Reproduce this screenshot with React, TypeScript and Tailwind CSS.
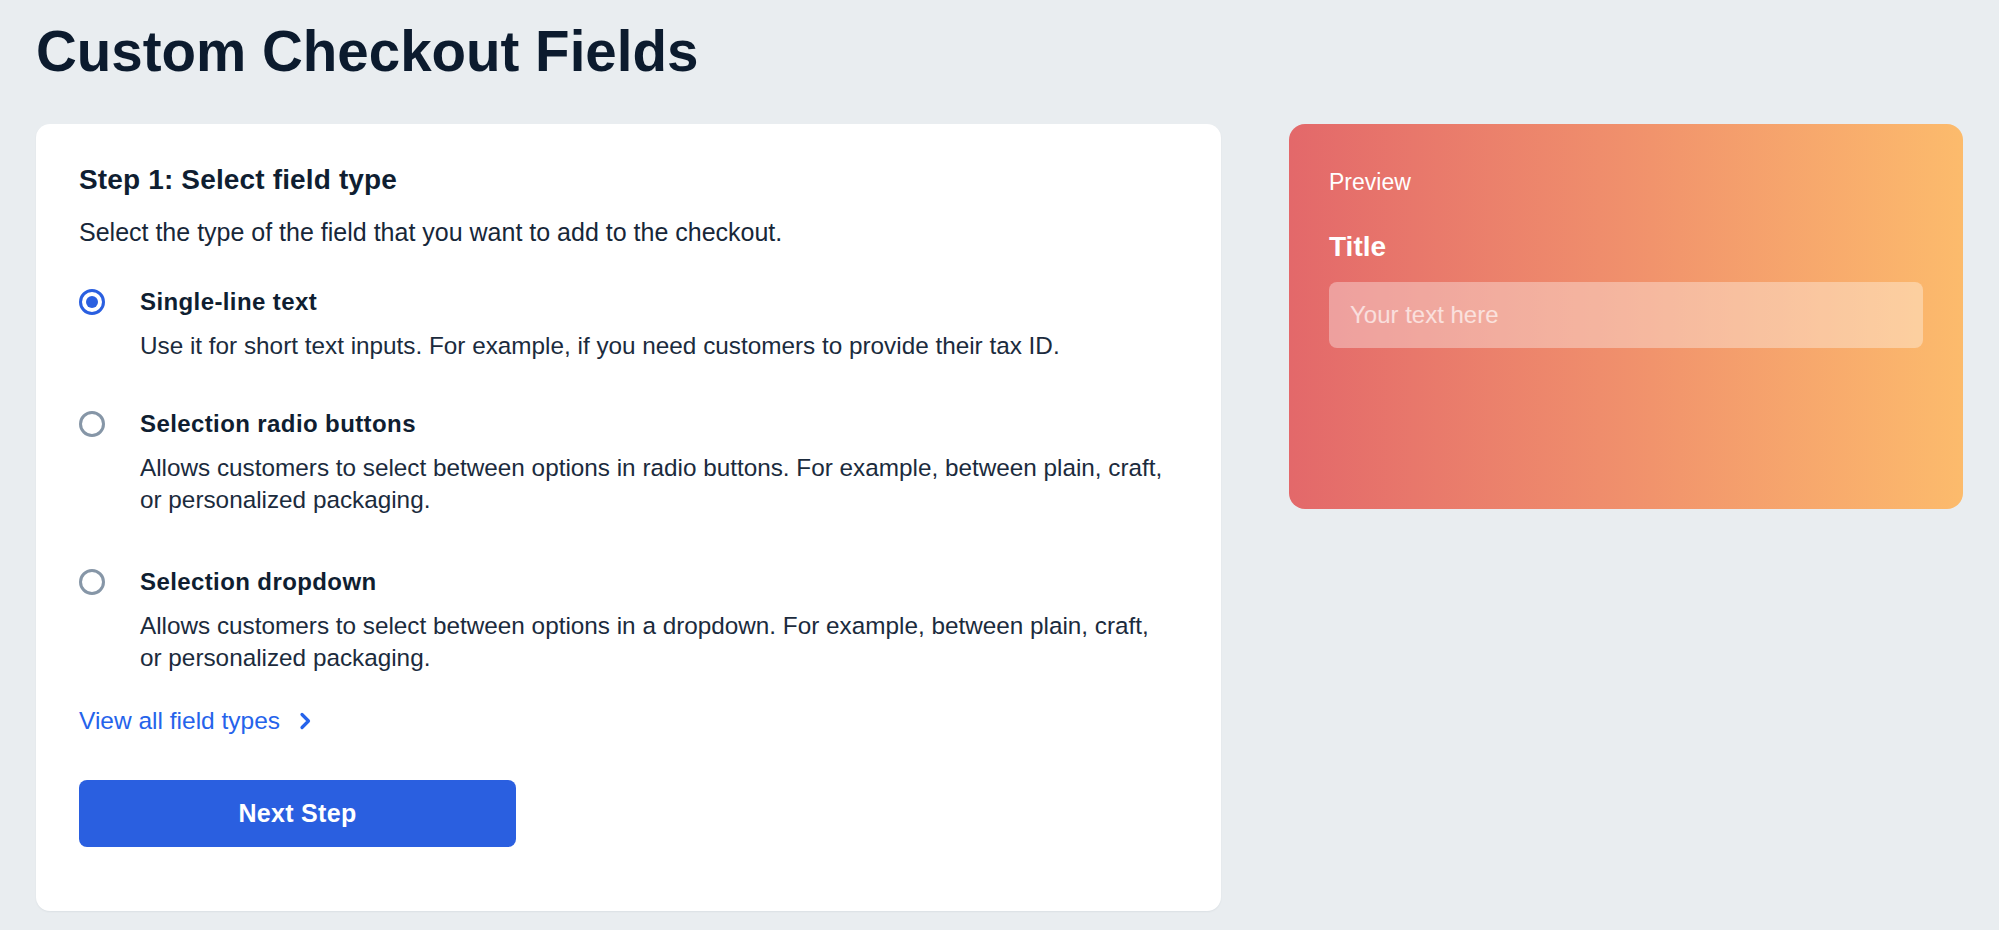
import React from "react";

type Item = { label: string; lines: string[]; selected?: boolean; gap: string };

const items: Item[] = [
  {
    label: "Single-line text",
    lines: ["Use it for short text inputs. For example, if you need customers to provide their tax ID."],
    selected: true,
    gap: "mt-0",
  },
  {
    label: "Selection radio buttons",
    lines: [
      "Allows customers to select between options in radio buttons. For example, between plain, craft,",
      "or personalized packaging.",
    ],
    gap: "mt-[45.5px]",
  },
  {
    label: "Selection dropdown",
    lines: [
      "Allows customers to select between options in a dropdown. For example, between plain, craft,",
      "or personalized packaging.",
    ],
    gap: "mt-[50.5px]",
  },
];

function Radio({ selected }: { selected?: boolean }) {
  if (selected) {
    return (
      <div className="mt-[3px] flex h-[26px] w-[26px] shrink-0 items-center justify-center rounded-full border-[3px] border-[#2a5fe0]">
        <div className="h-[12px] w-[12px] rounded-full bg-[#2a5fe0]" />
      </div>
    );
  }
  return <div className="mt-[3px] h-[26px] w-[26px] shrink-0 rounded-full border-[3px] border-[#8696a7]" />;
}

export default function App() {
  return (
    <div className="min-h-[930px] bg-[#e9edf0] px-[36px] pt-[20px] font-['Liberation_Sans',Arial,sans-serif] text-[#172739]">
      <h1 className="text-[56.5px] leading-[64px] font-bold text-[#0c1b2e]">Custom Checkout Fields</h1>
      <div className="mt-[40px] flex items-start gap-[68px]">
        <div className="w-[1185px] rounded-[14px] bg-white px-[43px] pt-[38px] pb-[64px] shadow-[0_1px_2px_rgba(15,30,50,0.06)]">
          <h2 className="text-[28px] leading-[36px] font-bold tracking-[0.15px] text-[#0f1e31]">Step 1: Select field type</h2>
          <p className="mt-[16px] text-[25px] leading-[36px]">
            Select the type of the field that you want to add to the checkout.
          </p>
          <div className="mt-[36px] flex flex-col">
            {items.map((it) => (
              <div key={it.label} className={`flex items-start gap-[35px] ${it.gap}`}>
                <Radio selected={it.selected} />
                <div>
                  <div className="text-[24px] leading-[32px] font-bold tracking-[0.4px] text-[#0f1e31]">{it.label}</div>
                  <div className="mt-[12px] text-[24.3px] leading-[32px] text-[#1b2b3d]">
                    {it.lines.map((l, i) => (
                      <div key={i} className="whitespace-nowrap">
                        {l}
                      </div>
                    ))}
                  </div>
                </div>
              </div>
            ))}
          </div>
          <a className="mt-[31px] flex w-fit items-center text-[24.5px] leading-[32px] text-[#2563eb]" href="#">
            View all field types
            <svg className="ml-[18px]" width="14" height="20" viewBox="0 0 14 20" fill="none">
              <path d="M4 3.5 L10.5 10 L4 16.5" stroke="#2563eb" strokeWidth="3.2" strokeLinecap="round" strokeLinejoin="round" />
            </svg>
          </a>
          <button className="mt-[43px] h-[67px] w-[437px] rounded-[8px] bg-[#2a5fe0] text-[25px] font-bold tracking-[0.3px] text-white">
            Next Step
          </button>
        </div>
        <div className="h-[385px] flex-1 rounded-[16px] bg-linear-to-r from-[#e3686a] via-[#f0906c] to-[#fcbb6c] px-[40px] pt-[42px] text-white">
          <div className="text-[23px] leading-[32px]">Preview</div>
          <div className="mt-[31px] text-[28px] leading-[36px] font-bold">Title</div>
          <div className="mt-[17px] flex h-[66px] items-center rounded-[8px] bg-white/35 px-[21px] text-[24px] text-white/65">
            Your text here
          </div>
        </div>
      </div>
    </div>
  );
}
